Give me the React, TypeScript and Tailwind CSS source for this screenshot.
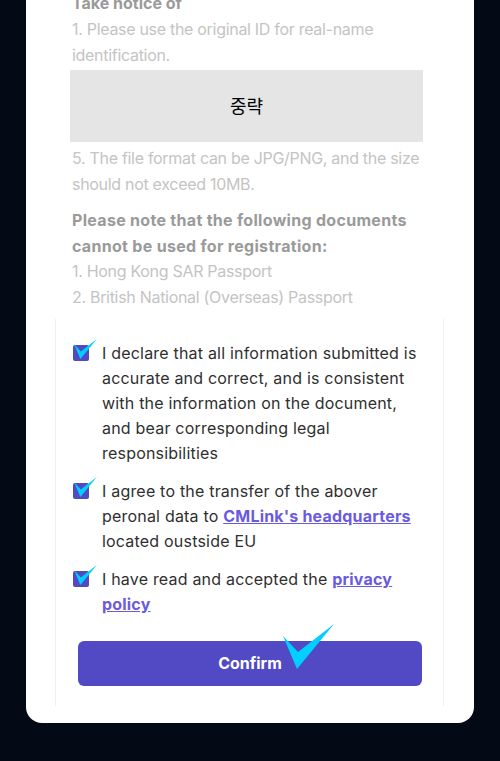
import type { ReactNode } from "react"

function Tick({ className }: { className?: string }) {
  return (
    <svg viewBox="0 0 51 45" className={className}>
      <polygon points="0,12 15,28 51,0 14,45" fill="#00cfff" />
    </svg>
  )
}

function CheckRow({ children }: { children: ReactNode }) {
  return (
    <div className="flex items-start gap-[13px]">
      <div className="relative mt-[4px] h-[16px] w-[16px] shrink-0 rounded-[2px] bg-[#524ac2]">
        <Tick className="absolute left-[1px] top-[-6px] h-[20px] w-[23px]" />
      </div>
      <p className="text-[16px] leading-[25px] tracking-[0.2px] text-[#2f2f2f]">{children}</p>
    </div>
  )
}

export default function App() {
  return (
    <div
      className="min-h-[761px] bg-[#030a16] px-[26px] pb-[39px]"
      style={{ fontFamily: "Inter, 'Noto Sans CJK KR', sans-serif" }}
    >
      <div className="overflow-hidden rounded-b-[16px] bg-white pb-[17px]">
        <div className="mt-[-10px] pl-[44px] pr-[51px]">
          <h3 className="pl-[2px] text-[16px] font-bold leading-[26px] text-[#9a9a9a]">Take notice of</h3>
          <p className="pl-[2px] text-[16px] leading-[26px] tracking-[-0.3px] text-[#c4c4c4]">
            1. Please use the original ID for real-name identification.
          </p>
          <div className="mt-[2px] flex h-[72px] items-center justify-center bg-[#e5e5e5] text-[18px] text-black">
            중략
          </div>
          <p className="mt-[3px] pl-[2px] text-[16px] leading-[26px] tracking-[-0.3px] text-[#c4c4c4]">
            5. The file format can be JPG/PNG, and the size should not exceed 10MB.
          </p>
          <p className="mt-[10px] pl-[2px] text-[16px] font-bold leading-[26px] tracking-[0.3px] text-[#9a9a9a]">
            Please note that the following documents cannot be used for registration:
          </p>
          <p className="pl-[2px] text-[16px] leading-[25px] tracking-[-0.3px] text-[#c4c4c4]">
            1. Hong Kong SAR Passport
          </p>
          <p className="pl-[2px] text-[16px] leading-[26px] tracking-[-0.3px] text-[#c4c4c4]">
            2. British National (Overseas) Passport
          </p>
        </div>

        <div className="ml-[29px] mr-[30px] mt-[9px] border-x border-[#efefef] pb-[20px] pl-[17px] pr-[21px] pt-[22px]">
          <div className="flex flex-col gap-[13px]">
            <CheckRow>
              I declare that all information submitted is accurate and correct, and is consistent with the
              information on the document, and bear corresponding legal responsibilities
            </CheckRow>
            <CheckRow>
              I agree to the transfer of the abover peronal data to{" "}
              <a className="font-bold text-[#6a5ae0] underline">CMLink's headquarters</a> located oustside EU
            </CheckRow>
            <CheckRow>
              I have read and accepted the <a className="font-bold text-[#6a5ae0] underline">privacy policy</a>
            </CheckRow>
          </div>
          <div className="relative ml-[5px] mt-[24px]">
            <button className="flex h-[45px] w-full items-center justify-center rounded-[6px] bg-[#514ac4] pb-[2px] text-[16px] font-bold text-white">
              Confirm
            </button>
            <Tick className="absolute left-[205px] top-[-17px] h-[45px] w-[51px]" />
          </div>
        </div>
      </div>
    </div>
  )
}
